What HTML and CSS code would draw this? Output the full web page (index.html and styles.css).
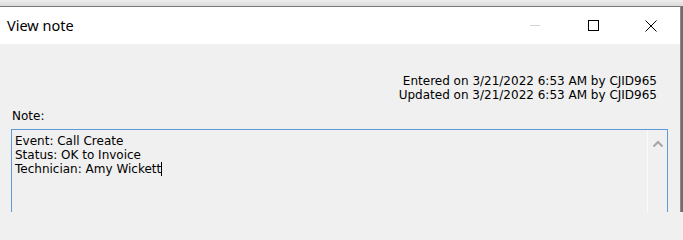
FILE: index.html
```html
<!DOCTYPE html>
<html>
<head>
<meta charset="utf-8">
<title>View note</title>
<link rel="stylesheet" href="styles.css">
</head>
<body>
<div class="desk">
  <div class="window">
    <div class="titlebar">
      <div class="title">View note</div>
      <div class="controls">
        <div class="ctl"><span class="min"></span></div>
        <div class="ctl"><span class="max"></span></div>
        <div class="ctl">
          <svg width="12" height="12" viewBox="0 0 12 12"><path d="M0.5 0.5L11.5 11.5M11.5 0.5L0.5 11.5" stroke="#000" stroke-width="1" fill="none"/></svg>
        </div>
      </div>
    </div>
    <div class="content">
      <div class="meta">
        <div>Entered on 3/21/2022 6:53 AM by CJID965</div>
        <div>Updated on 3/21/2022 6:53 AM by CJID965</div>
      </div>
      <div class="label">Note:</div>
      <div class="textbox">
        <div class="text">
          <div>Event: Call Create</div>
          <div>Status: OK to Invoice</div>
          <div>Technician: Amy Wickett<span class="caret"></span></div>
        </div>
        <div class="scroll">
          <svg width="12" height="8" viewBox="0 0 12 8"><path d="M1.5 6.5L6 2L10.5 6.5" stroke="#a6a6a6" stroke-width="2" fill="none"/></svg>
        </div>
      </div>
    </div>
  </div>
</div>
</body>
</html>
```

FILE: styles.css
```css
html, body {
  margin: 0;
  padding: 0;
  width: 683px;
  height: 212px;
  overflow: hidden;
  background: #f0f0f0;
}
.desk {
  width: 683px;
  height: 212px;
  padding-top: 6px;
  box-sizing: border-box;
  background: linear-gradient(#ededed, #dcdcdc 6px, #6e6e6e 6px);
  overflow: hidden;
}
.window {
  width: 680px;
  height: 205px;
  border-top: 1px solid #7a7a7a;
  border-right: 1px solid #8a8a8a;
  background: #f0f0f0;
  display: flex;
  flex-direction: column;
}
.titlebar {
  height: 37px;
  background: #ffffff;
  display: flex;
  align-items: center;
  justify-content: space-between;
  flex: none;
}
.title {
  font-family: "Noto Sans", "Open Sans", sans-serif;
  font-size: 14.5px;
  color: #000;
  padding-left: 7px;
  padding-bottom: 1px;
}
.controls {
  display: flex;
  height: 100%;
}
.ctl {
  width: 58px;
  height: 100%;
  display: flex;
  align-items: center;
  justify-content: center;
}
.min {
  width: 10px;
  height: 1px;
  background: #d4d4d4;
}
.max {
  width: 9px;
  height: 9px;
  border: 1px solid #000;
}
.content {
  flex: 1;
  min-height: 0;
  padding: 30px 12px 0 11px;
  font-family: "DejaVu Sans", sans-serif;
  font-size: 12px;
  color: #000;
  overflow: hidden;
}
.meta {
  text-align: right;
  line-height: 14px;
  padding-right: 11px;
}
.label {
  margin-top: 8px;
  line-height: 13px;
  padding-left: 1px;
}
.textbox {
  margin-top: 6px;
  height: 100px;
  border: 1px solid #5b9bd8;
  background: #f0f0f0;
  display: flex;
}
.text {
  flex: 1;
  padding: 4px 3px;
  line-height: 14px;
}
.caret {
  display: inline-block;
  width: 1px;
  height: 14px;
  background: #000;
  vertical-align: -3px;
}
.scroll {
  width: 19px;
  border-left: 1px solid #fbfbfb;
  display: flex;
  justify-content: center;
  align-items: flex-start;
  padding-top: 10px;
}
```
